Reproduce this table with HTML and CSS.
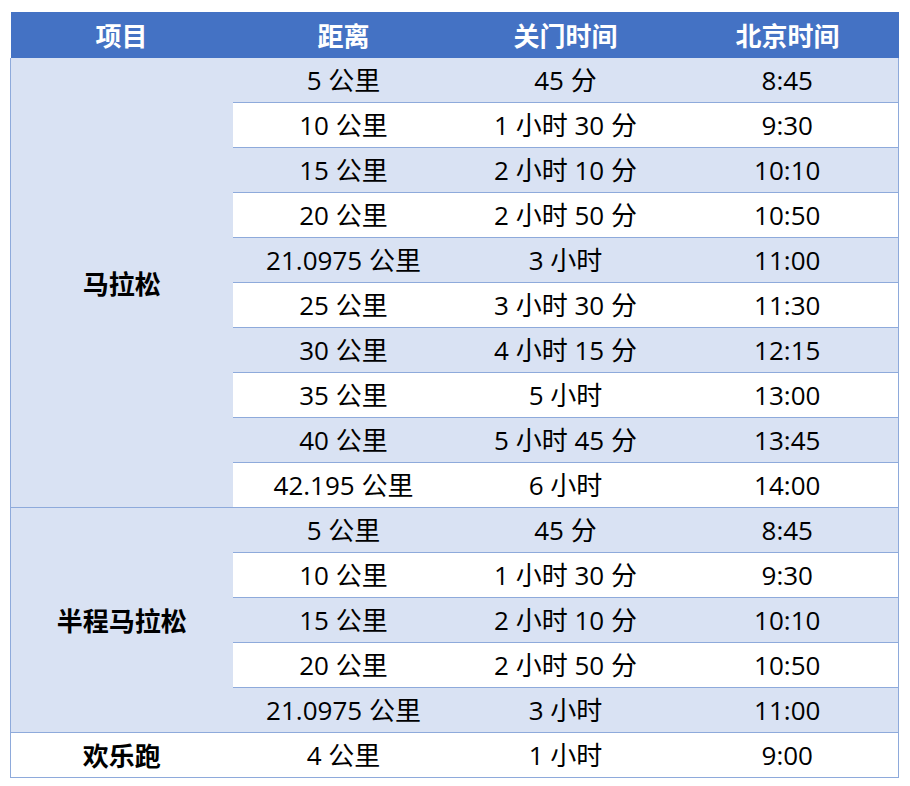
FILE: index.html
```html
<!DOCTYPE html>
<html lang="zh-CN">
<head>
<meta charset="utf-8">
<title>关门时间</title>
<link rel="stylesheet" href="styles.css">
</head>
<body>
<div class="wrap">
<table class="schedule">
  <colgroup><col><col><col><col></colgroup>
  <thead>
    <tr><th>项目</th><th>距离</th><th>关门时间</th><th>北京时间</th></tr>
  </thead>
  <tbody>
    <tr class="band"><td class="label band-cell" rowspan="10">马拉松</td><td>5 公里</td><td>45 分</td><td class="last">8:45</td></tr>
    <tr><td>10 公里</td><td>1 小时 30 分</td><td class="last">9:30</td></tr>
    <tr class="band"><td>15 公里</td><td>2 小时 10 分</td><td class="last">10:10</td></tr>
    <tr><td>20 公里</td><td>2 小时 50 分</td><td class="last">10:50</td></tr>
    <tr class="band"><td>21.0975 公里</td><td>3 小时</td><td class="last">11:00</td></tr>
    <tr><td>25 公里</td><td>3 小时 30 分</td><td class="last">11:30</td></tr>
    <tr class="band"><td>30 公里</td><td>4 小时 15 分</td><td class="last">12:15</td></tr>
    <tr><td>35 公里</td><td>5 小时</td><td class="last">13:00</td></tr>
    <tr class="band"><td>40 公里</td><td>5 小时 45 分</td><td class="last">13:45</td></tr>
    <tr><td>42.195 公里</td><td>6 小时</td><td class="last">14:00</td></tr>
    <tr class="band"><td class="label band-cell" rowspan="5">半程马拉松</td><td>5 公里</td><td>45 分</td><td class="last">8:45</td></tr>
    <tr><td>10 公里</td><td>1 小时 30 分</td><td class="last">9:30</td></tr>
    <tr class="band"><td>15 公里</td><td>2 小时 10 分</td><td class="last">10:10</td></tr>
    <tr><td>20 公里</td><td>2 小时 50 分</td><td class="last">10:50</td></tr>
    <tr class="band"><td>21.0975 公里</td><td>3 小时</td><td class="last">11:00</td></tr>
    <tr><td class="label">欢乐跑</td><td>4 公里</td><td>1 小时</td><td class="last">9:00</td></tr>
  </tbody>
</table>
</div>
</body>
</html>
```
FILE: styles.css
```css
html, body {
  margin: 0;
  padding: 0;
  background: #ffffff;
}
.wrap {
  padding: 12px 0 0 10px;
}
.schedule {
  border-collapse: collapse;
  table-layout: fixed;
  width: 888px;
  font-family: "Open Sans", "Noto Sans CJK SC", sans-serif;
  font-size: 26px;
  color: #000000;
}
.schedule col {
  width: 222px;
}
.schedule th {
  background: #4472c4;
  color: #ffffff;
  font-family: "Noto Sans CJK SC", sans-serif;
  font-weight: 700;
  height: 46px;
  padding: 0;
  text-align: center;
  vertical-align: middle;
  line-height: 1;
}
.schedule td {
  height: 44px;
  padding: 0;
  text-align: center;
  vertical-align: middle;
  line-height: 1;
  border-bottom: 1px solid #8eaadb;
  background: #ffffff;
}
.schedule tr.band td {
  background: #d9e2f3;
}
.schedule td.band-cell {
  background: #d9e2f3;
}
.schedule td.label {
  font-family: "Noto Sans CJK SC", sans-serif;
  font-weight: 700;
  border-left: 1px solid #8eaadb;
}
.schedule td.last {
  border-right: 1px solid #8eaadb;
}
```
